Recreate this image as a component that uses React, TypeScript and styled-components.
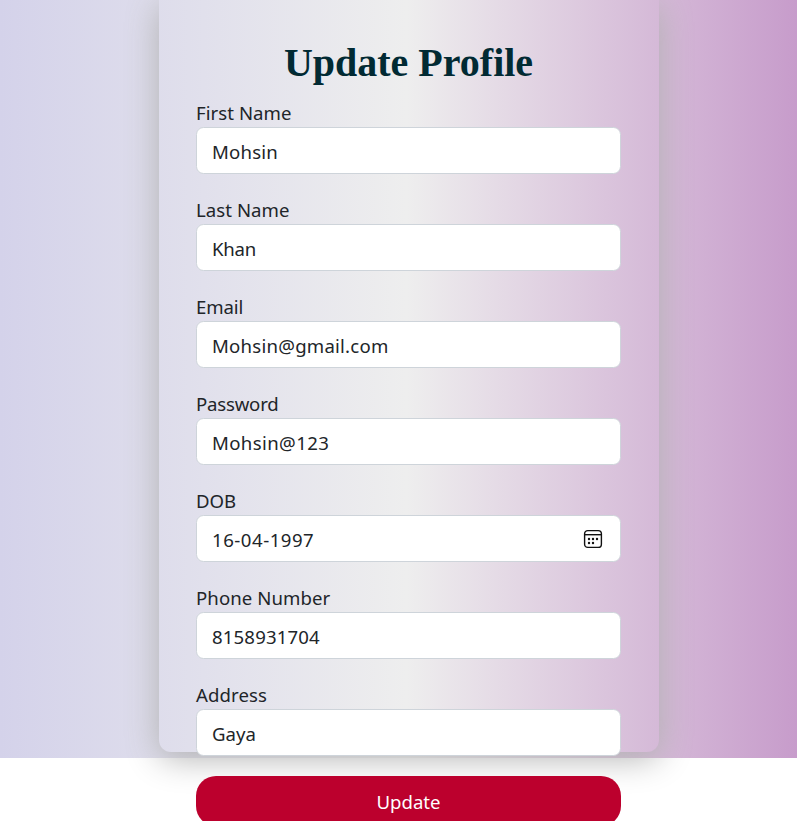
import React from "react";
import styled, { createGlobalStyle } from "styled-components";

const GlobalStyle = createGlobalStyle`
  *, *::before, *::after { box-sizing: border-box; }
  html, body { margin: 0; height: 821px; overflow: hidden; background: #fff; }
`;

const Page = styled.main`
  height: 758px;
  display: flex;
  justify-content: center;
  padding-left: 21px;
  background: linear-gradient(90deg, #d4d2ea 0%, #eeeeee 51%, #c79ccb 100%);
  font-family: "Noto Sans", "Open Sans", sans-serif;
  font-size: 18.6px;
  color: #212529;
`;

const Card = styled.form`
  width: 500px;
  height: 752px;
  padding: 36px 38px 0 37px;
  border-radius: 0 0 12px 12px;
  box-shadow: 0 6px 34px #b0b0b0;
`;

const Title = styled.h1`
  margin: 0 0 10px;
  height: 53px;
  text-align: center;
  font: 700 40px/53px "Liberation Serif", serif;
  color: #012a33;
  white-space: nowrap;
`;

const Field = styled.div`
  height: 97px;
`;

const Label = styled.label<{ $spacing: number }>`
  display: block;
  height: 28px;
  line-height: 28px;
  letter-spacing: ${(p) => p.$spacing}px;
`;

const Control = styled.div`
  display: flex;
  align-items: center;
  height: 47px;
  padding: 0 17px 0 15px;
  border: 1px solid #ced4da;
  border-radius: 7.5px;
  background: #fff;
`;

const Value = styled.input<{ $spacing: number }>`
  flex: 1;
  min-width: 0;
  height: 30px;
  margin-top: 2px;
  padding: 0;
  border: 0;
  outline: 0;
  background: transparent;
  font: inherit;
  color: inherit;
  letter-spacing: ${(p) => p.$spacing}px;
`;

const Submit = styled.button`
  display: block;
  width: 425px;
  height: 50px;
  margin-top: -2px;
  padding: 0;
  border: 0;
  border-radius: 20px;
  background: #bc002d;
  color: #fff;
  font: inherit;
`;

const CalendarIcon = () => (
  <svg width="20" height="20" viewBox="0 0 20 20" fill="none" aria-hidden="true">
    <rect x="1.6" y="1.6" width="16.8" height="16.8" rx="3.2" stroke="#111" strokeWidth="1.4" />
    <path d="M1.6 5.7H18.4" stroke="#111" strokeWidth="1.4" />
    <g fill="#111">
      <circle cx="6" cy="10" r="1.2" />
      <circle cx="10" cy="10" r="1.2" />
      <circle cx="14" cy="10" r="1.2" />
      <circle cx="6" cy="14" r="1.2" />
      <circle cx="10" cy="14" r="1.2" />
    </g>
  </svg>
);

const fields = [
  { id: "first", label: "First Name", value: "Mohsin", ls: 0.05, vs: 0.2 },
  { id: "last", label: "Last Name", value: "Khan", ls: 0.05, vs: -0.2 },
  { id: "email", label: "Email", value: "Mohsin@gmail.com", ls: -0.1, vs: 0.23 },
  { id: "password", label: "Password", value: "Mohsin@123", ls: -0.2, vs: 0.38 },
  { id: "dob", label: "DOB", value: "16-04-1997", ls: 0, vs: 0.52, calendar: true },
  { id: "phone", label: "Phone Number", value: "8158931704", ls: 0.08, vs: 0.15 },
  { id: "address", label: "Address", value: "Gaya", ls: 0.08, vs: 0 },
];

export default function App() {
  return (
    <>
      <GlobalStyle />
      <Page>
        <Card onSubmit={(e) => e.preventDefault()}>
          <Title>Update Profile</Title>
          {fields.map((f) => (
            <Field key={f.id}>
              <Label htmlFor={f.id} $spacing={f.ls}>{f.label}</Label>
              <Control>
                <Value id={f.id} defaultValue={f.value} $spacing={f.vs} />
                {f.calendar && <CalendarIcon />}
              </Control>
            </Field>
          ))}
          <Submit type="submit">Update</Submit>
        </Card>
      </Page>
    </>
  );
}
